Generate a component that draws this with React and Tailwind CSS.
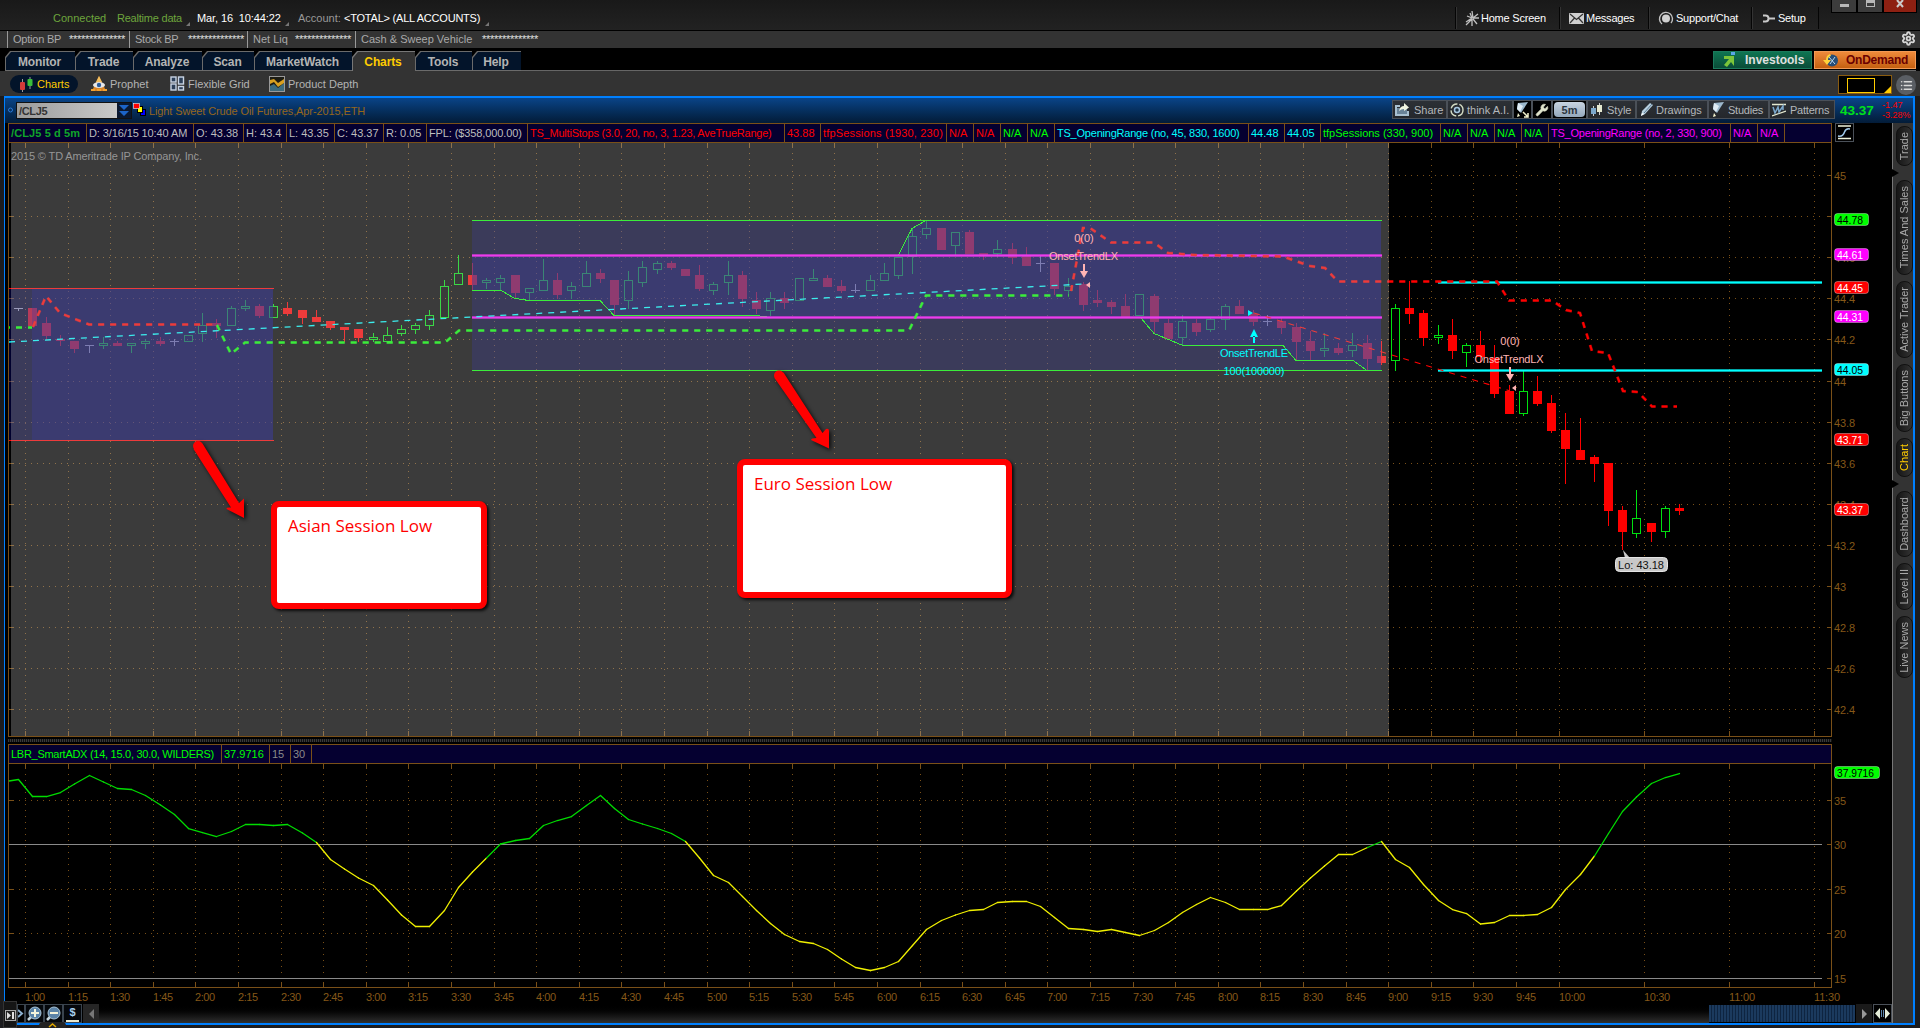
import React from 'react';
import { Settings, Wrench, List } from 'lucide-react';

const FIRST_BAR = 18;
const BAR_STEP = 14.2;
const AXIS = '#7a5018';
const AXIS_TEXT = '#865818';

// [type, body top, body bottom, high, low] - r: down bar, g: up bar, d: doji
const candles = [
  ['d', 308, 308, 308, 311], ['r', 308, 326, 308, 326], ['r', 323, 336, 317, 340], ['r', 339, 341, 335, 346],
  ['r', 341, 349, 341, 353], ['d', 345, 345, 345, 353], ['g', 343, 346, 337, 349], ['r', 343, 346, 341, 346],
  ['g', 343, 346, 343, 353], ['g', 341, 344, 339, 349], ['r', 341, 344, 337, 346], ['d', 341, 341, 339, 346],
  ['g', 335, 342, 335, 342], ['g', 325, 334, 313, 342], ['r', 323, 326, 319, 338], ['g', 308, 326, 306, 326],
  ['g', 306, 309, 300, 311], ['r', 306, 316, 304, 318], ['g', 306, 318, 304, 318], ['r', 308, 314, 302, 316],
  ['r', 310, 318, 310, 324], ['r', 317, 322, 310, 322], ['r', 321, 328, 321, 330], ['r', 327, 330, 327, 342],
  ['r', 329, 338, 329, 342], ['g', 337, 340, 333, 342], ['g', 335, 342, 327, 342], ['g', 329, 334, 325, 336],
  ['g', 325, 330, 323, 334], ['g', 315, 326, 310, 330], ['g', 286, 318, 280, 318], ['g', 273, 285, 255, 285],
  ['r', 275, 285, 263, 290], ['g', 280, 283, 278, 289], ['g', 278, 283, 275, 290], ['r', 275, 293, 275, 298],
  ['g', 288, 293, 288, 300], ['g', 280, 291, 259, 291], ['r', 280, 295, 273, 299], ['g', 286, 291, 282, 299],
  ['g', 273, 287, 261, 287], ['r', 273, 279, 269, 283], ['r', 280, 305, 280, 316], ['g', 280, 301, 271, 309],
  ['g', 267, 283, 261, 287], ['g', 263, 270, 261, 274], ['r', 263, 268, 261, 270], ['r', 269, 276, 269, 276],
  ['r', 275, 289, 265, 291], ['g', 284, 291, 282, 295], ['g', 275, 283, 261, 295], ['r', 275, 299, 271, 307],
  ['r', 300, 309, 292, 314], ['g', 298, 311, 292, 316], ['r', 298, 303, 292, 309], ['g', 278, 301, 278, 301],
  ['g', 278, 281, 269, 281], ['r', 278, 287, 275, 287], ['r', 286, 291, 280, 293], ['d', 290, 290, 284, 293],
  ['g', 280, 291, 275, 291], ['g', 273, 281, 263, 281], ['g', 257, 276, 257, 279], ['g', 236, 257, 228, 274],
  ['g', 228, 235, 220, 239], ['r', 228, 250, 228, 250], ['g', 232, 246, 232, 255], ['r', 232, 254, 230, 254],
  ['r', 253, 255, 253, 260], ['g', 249, 254, 240, 257], ['r', 249, 258, 243, 264], ['r', 256, 266, 247, 266],
  ['d', 263, 263, 256, 272], ['r', 263, 289, 263, 295], ['g', 286, 291, 278, 295], ['r', 284, 305, 282, 311],
  ['r', 300, 303, 290, 307], ['r', 302, 307, 300, 314], ['r', 306, 317, 294, 317], ['g', 294, 316, 294, 316],
  ['r', 296, 322, 294, 333], ['r', 323, 339, 319, 339], ['g', 321, 338, 315, 345], ['r', 323, 332, 319, 336],
  ['g', 319, 330, 317, 332], ['g', 306, 320, 304, 330], ['r', 306, 314, 300, 314], ['r', 314, 322, 310, 326],
  ['d', 321, 321, 315, 326], ['r', 321, 328, 317, 334], ['r', 327, 342, 323, 360], ['r', 341, 351, 331, 360],
  ['g', 348, 351, 333, 357], ['r', 348, 353, 343, 355], ['g', 345, 351, 333, 357], ['r', 343, 359, 335, 370],
  ['r', 356, 363, 341, 365], ['g', 308, 361, 304, 371], ['r', 308, 314, 281, 324], ['r', 313, 338, 310, 346],
  ['g', 335, 338, 325, 344], ['r', 335, 351, 319, 359], ['g', 345, 353, 343, 367], ['r', 345, 357, 331, 363],
  ['r', 358, 394, 345, 398], ['r', 391, 414, 385, 414], ['g', 391, 414, 371, 416], ['r', 391, 404, 376, 406],
  ['r', 403, 431, 395, 433], ['r', 430, 449, 413, 484], ['r', 450, 460, 418, 460], ['r', 457, 464, 455, 482],
  ['r', 463, 511, 463, 526], ['r', 510, 532, 506, 550], ['g', 518, 534, 490, 538], ['r', 523, 532, 523, 542],
  ['g', 508, 532, 506, 538], ['r', 508, 511, 504, 515],
];

// y of the ADX line at each bar, starting at the left edge of the plot
const adx = [
  779.5, 796.5, 796.5, 792.5, 784, 775.5, 782, 788.5, 789.5, 795.5, 805, 814.5, 828.5, 832.5, 836.5, 831.5, 824.5,
  824.5, 825.5, 824.5, 833, 842.5, 859.5, 869, 878, 885.5, 900, 915, 926.5, 926.5, 910.5, 887.5, 872, 858, 844,
  840.5, 838.5, 825.5, 820.5, 816.5, 805.5, 795.5, 808.5, 819.5, 824, 828.5, 833.5, 841.5, 858, 875.5, 882.5, 896.5,
  910.5, 923.5, 934.5, 941.5, 943.5, 949.5, 959, 967.5, 970.5, 967.5, 961.5, 945.5, 929.5, 920.5, 915, 910.5, 909.5,
  902.5, 901.5, 901.5, 906.5, 917.5, 928.5, 929.5, 931.5, 929.5, 932.5, 935.5, 930.5, 922.5, 912.5, 904.5, 897.5,
  902.5, 909.5, 909.5, 909.5, 905.5, 891, 878, 866, 854.5, 854.5, 847.5, 841.5, 859.5, 867.5, 884.5, 900.5, 909.5,
  913.5, 924, 922.5, 915.5, 915.5, 914.5, 907.5, 889.5, 874.5, 856, 833.5, 811.5, 797, 783.5, 777.5, 773.5,
];

const times = [
  '1:00', '1:15', '1:30', '1:45', '2:00', '2:15', '2:30', '2:45', '3:00', '3:15', '3:30', '3:45', '4:00', '4:15',
  '4:30', '4:45', '5:00', '5:15', '5:30', '5:45', '6:00', '6:15', '6:30', '6:45', '7:00', '7:15', '7:30', '7:45',
  '8:00', '8:15', '8:30', '8:45', '9:00', '9:15', '9:30', '9:45', '10:00', null, '10:30', null, '11:00', null, '11:30',
];

const timeTicks = times
  .map((label, i) => ({ label, x: Math.floor(25.4 + 42.6 * i) }))
  .filter((t) => t.label);

const priceY = (p) => Math.floor(175.4 + (45 - p) * 205.6);
const barX = (i) => Math.floor(FIRST_BAR + 0.1 + BAR_STEP * i);

const prices = [45, 44.8, 44.6, 44.4, 44.2, 44, 43.8, 43.6, 43.4, 43.2, 43, 42.8, 42.6, 42.4];
const adxLevels = [[35, 800], [30, 844], [25, 889], [20, 933], [15, 978]];

const priceTags = [
  ['44.78', 219, '#00ff00', '#000'],
  ['44.61', 254, '#ff00ff', '#fff'],
  ['44.45', 287, '#ff0000', '#fff'],
  ['44.31', 316, '#ff00ff', '#fff'],
  ['44.05', 369, '#00ffff', '#000'],
  ['43.71', 439, '#ff0000', '#fff'],
  ['43.37', 509, '#ff0000', '#fff'],
];

const infoCells = [
  ['/CLJ5 5 d 5m', 'w-[78px] text-[#10a52a] font-bold tracking-[0.01em]'],
  ['D: 3/16/15 10:40 AM', 'w-[107px] text-[#bdbdbd] tracking-[-0.01em]'],
  ['O: 43.38', 'w-[50px] text-[#bdbdbd]'],
  ['H: 43.4', 'w-[43px] text-[#bdbdbd]'],
  ['L: 43.35', 'w-[48px] text-[#bdbdbd]'],
  ['C: 43.37', 'w-[49px] text-[#bdbdbd]'],
  ['R: 0.05', 'w-[43px] text-[#bdbdbd]'],
  ['FPL: ($358,000.00)', 'w-[101px] text-[#bdbdbd] tracking-[-0.01em]'],
  ['TS_MultiStops (3.0, 20, no, 3, 1.23, AveTrueRange)', 'w-[257px] text-[#ff0000] tracking-[-0.02em]'],
  ['43.88', 'w-[36px] text-[#ff0000]'],
  ['tfpSessions (1930, 230)', 'w-[126px] text-[#ff0000] tracking-[0.015em]'],
  ['N/A', 'w-[27px] text-[#ff0000]'],
  ['N/A', 'w-[27px] text-[#ff0000]'],
  ['N/A', 'w-[27px] text-[#00ff00]'],
  ['N/A', 'w-[27px] text-[#00ff00]'],
  ['TS_OpeningRange (no, 45, 830, 1600)', 'w-[194px] text-[#00ffff] tracking-[-0.02em]'],
  ['44.48', 'w-[36px] text-[#00ffff]'],
  ['44.05', 'w-[36px] text-[#00ffff]'],
  ['tfpSessions (330, 900)', 'w-[120px] text-[#00ff00]'],
  ['N/A', 'w-[27px] text-[#00ff00]'],
  ['N/A', 'w-[27px] text-[#00ff00]'],
  ['N/A', 'w-[27px] text-[#00ff00]'],
  ['N/A', 'w-[27px] text-[#00ff00]'],
  ['TS_OpeningRange (no, 2, 330, 900)', 'w-[182px] text-[#ff00ff] tracking-[-0.02em]'],
  ['N/A', 'w-[27px] text-[#ff00ff]'],
  ['N/A', 'w-[27px] text-[#ff00ff]'],
];

const adxCells = [
  ['LBR_SmartADX (14, 15.0, 30.0, WILDERS)', 'w-[213px] text-[#00ff00] tracking-[-0.025em]'],
  ['37.9716', 'w-[48px] text-[#00ff00]'],
  ['15', 'w-[21px] text-[#8a8a8a]'],
  ['30', 'w-[21px] text-[#8a8a8a]'],
];

const tabs = [
  ['Monitor', 'w-[70px]'],
  ['Trade', 'w-[58px]'],
  ['Analyze', 'w-[69px]'],
  ['Scan', 'w-[52px]'],
  ['MarketWatch', 'w-[98px]'],
  ['Charts', 'w-[63px]'],
  ['Tools', 'w-[57px]'],
  ['Help', 'w-[49px]'],
];

const sideTabs = [
  ['Trade', 'h-[40px] mt-[3px]'],
  ['Times And Sales', 'h-[95px] mt-[14px]'],
  ['Active Trader', 'h-[77px] mt-[6px]'],
  ['Big Buttons', 'h-[68px] mt-[6px]'],
  ['Chart', 'h-[39px] mt-[6px]'],
  ['Dashboard', 'h-[66px] mt-[14px]'],
  ['Level II', 'h-[47px] mt-[6px]'],
  ['Live News', 'h-[62px] mt-[6px]'],
];

const Corner = ({ className }) => (
  <svg className={`shrink-0 ${className}`} width="4" height="4">
    <path d="M4 0V4H0Z" fill="#777" />
  </svg>
);

const InfoRow = ({ cells }) => (
  <div className="flex h-5 w-[1824px] shrink-0 border-y border-l border-[#7a5018] bg-[#050030]">
    {cells.map(([text, cls], i) => (
      <div key={i} className={`shrink-0 whitespace-nowrap border-r border-[#7a5018] pl-[2px] leading-[18px] ${cls}`}>
        {text}
      </div>
    ))}
    <div className="flex-1 border-r border-[#7a5018]" />
  </div>
);

const ThickDash = ({ points, color, offset = 0 }) => (
  <g fill="none" stroke={color} strokeDasharray="6 6" strokeDashoffset={offset}>
    <polyline points={points} strokeWidth="3" opacity="0.5" />
    <polyline points={points} strokeWidth="2" />
  </g>
);

const Band = ({ x1, x2, y, color }) => (
  <g fill={color}>
    <rect x={x1} y={y - 1} width={x2 - x1} height="3" opacity="0.65" />
    <rect x={x1} y={y} width={x2 - x1} height="1" />
  </g>
);

const Candle = ({ x, bar }) => {
  const [type, top, bottom, high, low] = bar;
  if (type === 'd') {
    return (
      <g fill="#c8c8c8">
        <rect x={x - 4} y={top} width="9" height="1" />
        <rect x={x} y={high} width="1" height={low - high} />
      </g>
    );
  }
  const color = type === 'r' ? '#ff0000' : '#00e010';
  return (
    <g fill={color}>
      <rect x={x} y={high} width="1" height={top - high} />
      <rect x={x} y={bottom} width="1" height={low - bottom} />
      {type === 'r' ? (
        <rect x={x - 4} y={top} width="9" height={bottom - top} />
      ) : (
        <rect x={x - 3.5} y={top + 0.5} width="8" height={Math.max(bottom - top - 1, 1)} fill="none" stroke={color} />
      )}
    </g>
  );
};

const Grid = ({ rows, top, bottom }) => (
  <g shapeRendering="crispEdges" stroke={AXIS}>
    {timeTicks.map(({ x }) => (
      <g key={x}>
        <line x1={x + 0.5} x2={x + 0.5} y1={top + 10} y2={bottom - 6} strokeDasharray="1 5" />
        <line x1={x + 0.5} x2={x + 0.5} y1={top} y2={top + 5} />
        <line x1={x + 0.5} x2={x + 0.5} y1={bottom - 5} y2={bottom} />
      </g>
    ))}
    {rows.map((y) => (
      <g key={y}>
        <line x1="19" x2="1823" y1={y + 0.5} y2={y + 0.5} strokeDasharray="1 5" />
        <line x1="9" x2="14" y1={y + 0.5} y2={y + 0.5} />
        <line x1="1827" x2="1832" y1={y + 0.5} y2={y + 0.5} />
      </g>
    ))}
    <path d={`M8.5 ${top}V${bottom + 0.5}H1831.5V${top}`} fill="none" />
  </g>
);

const Tag = ({ x, y, w, text, fill, color }) => (
  <g>
    <rect x={x + 0.5} y={y - 5.5} width={w} height="12" rx="3" fill={fill} stroke="#fff" strokeOpacity="0.35" />
    <text x={x + 3} y={y + 5} fill={color} textLength={w - 8} lengthAdjust="spacingAndGlyphs">{text}</text>
  </g>
);

const SellMarker = ({ x, y }) => (
  <g fill="#ffb4b4">
    <rect x={x - 1} y={y} width="2" height="9" />
    <path d={`M${x - 4} ${y + 7}H${x + 4}L${x} ${y + 14}Z`} />
    <path d={`M${x + 6} ${y + 18}V${y + 24}L${x + 2} ${y + 21}Z`} />
  </g>
);

const PriceChart = () => (
  <svg className="block shrink-0" width="1887" height="594" viewBox="5 143 1887 594" fontSize="11">
    <Grid rows={prices.map(priceY)} top={143} bottom={736} />
    <g shapeRendering="crispEdges">
      {candles.map((bar, i) => (
        <Candle key={i} x={barX(i)} bar={bar} />
      ))}
      <g fill="#000091" fillOpacity="0.31">
        <rect x="9" y="289" width="264" height="151" />
        <rect x="32" y="289" width="241" height="151" />
        <rect x="472" y="220" width="909" height="150" />
        <path d="M472 255H899L912 228L926 220H1381V370H1367L1353 360H1296L1283 345H1183L1154 333L1141 317H767L757 315H614L600 300H529L515 298L501 290H472Z" />
      </g>
      <rect x="9" y="288" width="265" height="1" fill="#ff0000" />
      <rect x="9" y="440" width="265" height="1" fill="#ff0000" />
      <rect x="472" y="220" width="910" height="1" fill="#00ff00" />
      <rect x="472" y="370" width="910" height="1" fill="#00ff00" />
      <g fill="none" stroke="#00ff00">
        <path d="M472 290.5H501L515 298.5L529 300.5H600L614 315.5H757L767 317" />
        <path d="M898 256L912 228.5L926 220.5" />
        <path d="M1141 318L1154 333.5L1183 345.5H1283L1296 360.5H1353L1367 370.5" />
      </g>
    </g>
    <Band x1={472} x2={1382} y={255} color="#ff00ff" />
    <Band x1={472} x2={1382} y={317} color="#ff00ff" />
    <Band x1={1438} x2={1822} y={282} color="#00ffff" />
    <Band x1={1438} x2={1822} y={370} color="#00ffff" />
    <ThickDash color="#00ff00" offset={5} points="9,327.5 32,327.5" />
    <ThickDash color="#ff0000" points="33,327 46,296 60,313 75,319 89,324.5 217,324.5" />
    <ThickDash color="#00ff00" points="217,325 231,354 245,342.5 445,342.5 459,330.5 909,330.5 926,295.5 1069,295.5" />
    <ThickDash
      color="#ff0000"
      points="1071,291 1083,228 1090,228 1111,242.5 1154,242.5 1168,253 1195,255 1283,256.5 1310,266 1325,268 1338,281.5 1497,281.5 1509,300.5 1552,300.5 1566,310 1580,313 1592,351 1608,353 1623,391 1638,392 1652,406.5 1677,406.5"
    />
    <g fill="none" strokeDasharray="6 6">
      <line x1="9" y1="342" x2="1083" y2="284" stroke="#00ffff" strokeWidth="1.3" />
      <line x1="1254" y1="313" x2="1510" y2="391" stroke="#ff0000" strokeWidth="1.2" />
    </g>
    {/* extended-hours shading, up to the 9:00 open */}
    <rect x="11" y="143" width="1378" height="593" fill="#c3c3c3" fillOpacity="0.3" />

    <text x="11" y="160" fill="#969696" textLength="191">2015 © TD Ameritrade IP Company, Inc.</text>

    <g fill="#ffb4b4" textAnchor="middle">
      <text x="1084" y="242">0(0)</text>
      <text x="1083.5" y="260" textLength="69">OnsetTrendLX</text>
      <text x="1510" y="345">0(0)</text>
      <text x="1509" y="363" textLength="69">OnsetTrendLX</text>
    </g>
    <SellMarker x={1084} y={264} />
    <SellMarker x={1510} y={367} />
    <g fill="#00ffff" textAnchor="middle">
      <text x="1254" y="357" textLength="68">OnsetTrendLE</text>
      <text x="1254" y="375" textLength="61">100(100000)</text>
      <path d="M1250 337H1258L1254 329ZM1253 336H1255V343H1253ZM1248 310V316L1253 313Z" />
    </g>

    <g>
      <path d="M1623 550L1625 558H1630Z" fill="#c8c8c8" />
      <rect x="1615.5" y="557.5" width="52" height="14" rx="4" fill="#c8c8c8" stroke="#e4e4e4" />
      <text x="1618" y="569" fill="#111" textLength="46" lengthAdjust="spacingAndGlyphs">Lo: 43.18</text>
    </g>

    {prices.map((p) => {
      return p === 44.8 ? null : (
        <text key={p} x="1834" y={priceY(p) + 5} fill={AXIS_TEXT} textLength={String(p).length > 2 ? 21 : 12}>{p}</text>
      );
    })}
    {priceTags.map(([text, y, fill, color]) => (
      <Tag key={text} x={1834} y={y} w={34} text={text} fill={fill} color={color} />
    ))}
  </svg>
);

const AdxChart = () => (
  <svg className="block shrink-0" width="1887" height="240" viewBox="5 764 1887 240" fontSize="11">
    <Grid rows={[800, 889, 933]} top={764} bottom={987} />
    <g shapeRendering="crispEdges">
      <rect x="9" y="844" width="1813" height="1" fill="#8a8a8a" />
      <rect x="9" y="978" width="1813" height="1" fill="#8a8a8a" />
      <rect x="1827" y="844" width="5" height="1" fill={AXIS} />
      <rect x="1827" y="978" width="5" height="1" fill={AXIS} />
    </g>
    <line x1="9" y1="781" x2="18.5" y2="779.5" stroke="#00dc00" strokeWidth="1.3" />
    {adx.slice(1).map((y, i) => (
      <line
        key={i}
        x1={barX(i) + 0.5}
        y1={adx[i]}
        x2={barX(i + 1) + 0.5}
        y2={y}
        strokeWidth="1.3"
        stroke={y < 845 ? '#00dc00' : '#f0f000'}
        strokeLinecap="round"
      />
    ))}
    <Tag x={1834} y={772} w={45} text="37.9716" fill="#00ff00" color="#000" />
    {adxLevels.map(([v, y]) => (
      <text key={v} x="1834" y={y + 5} fill={AXIS_TEXT}>{v}</text>
    ))}
    {timeTicks.map(({ label, x }) => (
      <text key={x} x={x} y="1001" fill={AXIS_TEXT} textLength={label.length > 4 ? 26 : 20}>{label}</text>
    ))}
  </svg>
);

// Callout boxes and arrows drawn on top of the chart
const Annotations = () => (
  <>
    <svg
      className="pointer-events-none absolute left-0 top-0 drop-shadow-[2px_2px_2px_rgba(0,0,0,0.8)]"
      width="1100"
      height="560"
      fill="#ff0000"
    >
      <circle cx="198" cy="446" r="5" />
      <path d="M193.500 449L202.500 443.500L239 503L244 498.500V518L226.500 509Q226 507 231 507.500Z" />
      <circle cx="779" cy="375.500" r="5" />
      <path d="M774.500 378L783.500 372.500L822.500 433L826 429Q829 428 829 431V448.500L811 440Q811 438 816.500 438Z" />
    </svg>
    <div className="absolute left-[271px] top-[501px] h-[108px] w-[216px] rounded-lg border-[6px] border-[#ff0000] bg-white pl-[11px] pt-[6px] font-['Open_Sans','Noto_Sans',sans-serif] text-[17px] leading-[25px] text-[#ff0000] shadow-[2px_2px_3px_rgba(0,0,0,0.8)]">
      Asian Session Low
    </div>
    <div className="absolute left-[737px] top-[459px] h-[139px] w-[275px] rounded-lg border-[6px] border-[#ff0000] bg-white pl-[11px] pt-[6px] font-['Open_Sans','Noto_Sans',sans-serif] text-[17px] leading-[25px] text-[#ff0000] shadow-[2px_2px_3px_rgba(0,0,0,0.8)]">
      Euro Session Low
    </div>
  </>
);

const StarIcon = () => (
  <svg className="shrink-0" width="15" height="17" viewBox="0 0 15 17" stroke="#c0c0c0" strokeWidth="1.3">
    <path d="M7 1L8 8L13 4M8 8H14M8 9L12 14M7 9V16M7 9L1 15M7 8L1 12M7 8L2 6M7 8L5 3" fill="none" />
  </svg>
);

const MailIcon = () => (
  <svg className="shrink-0" width="15" height="11" viewBox="0 0 15 11">
    <rect width="15" height="11" rx="1" fill="#d0d0d0" />
    <path d="M1 1L7.500 6.500L14 1M1 10L5.500 5M14 10L9.500 5" fill="none" stroke="#333" strokeWidth="1.2" />
  </svg>
);

const SupportIcon = () => (
  <svg className="shrink-0" width="16" height="15" viewBox="0 0 16 15">
    <circle cx="8" cy="7.500" r="4" fill="#d0d0d0" />
    <path d="M4 13A6.500 6.500 0 1 1 13 12" fill="none" stroke="#c0c0c0" strokeWidth="1.4" />
  </svg>
);

const SetupIcon = () => (
  <svg className="shrink-0" width="14" height="9" viewBox="0 0 14 9">
    <path d="M1 1.500H3.500A3 3 0 0 1 3.500 7.500H1M6.500 4.500H13" fill="none" stroke="#c8c8c8" strokeWidth="2" />
  </svg>
);

const topLink = 'mb-px mt-[7px] flex items-center whitespace-nowrap border-l border-[#050505] leading-none tracking-[-0.02em] shadow-[inset_1px_0_0_#333]';

const TopBar = () => (
  <div className="flex h-[31px] shrink-0 border-b border-black bg-gradient-to-b from-[#191919] to-[#222] pl-[53px] leading-[36px]">
    <span className="w-16 text-[#6da53c]">Connected</span>
    <span className="w-[69px] whitespace-nowrap tracking-[-0.02em] text-[#6da53c]">Realtime data</span>
    <Corner className="mt-[22px]" />
    <span className="ml-[7px] w-[88px] whitespace-nowrap tracking-[-0.01em] text-white">Mar, 16 &nbsp;10:44:22</span>
    <Corner className="mt-[22px]" />
    <span className="ml-[9px] w-[46px] text-[#999]">Account:</span>
    <span className="w-[141px] whitespace-nowrap tracking-[-0.02em] text-white">&lt;TOTAL&gt; (ALL ACCOUNTS)</span>
    <Corner className="mt-[22px]" />
    <div className="ml-auto flex text-white">
      <div className={`${topLink} w-[104px] gap-[1px] pl-[9px]`}><StarIcon />Home Screen</div>
      <div className={`${topLink} w-[89px] gap-[2px] pl-[9px]`}><MailIcon />Messages</div>
      <div className={`${topLink} w-[103px] gap-[2px] pl-[9px]`}><SupportIcon />Support/Chat</div>
      <div className={`${topLink} w-[68px] gap-[2px] border-r pl-[10px]`}><SetupIcon />Setup</div>
    </div>
    <div className="ml-3 mr-[3px] flex h-[13px]">
      <div className="flex w-[26px] justify-center border border-t-0 border-black bg-[#3c3c3c] pt-1"><i className="block h-[3px] w-[9px] bg-[#b8b8b8]" /></div>
      <div className="flex w-[26px] justify-center border border-t-0 border-black bg-[#3c3c3c]"><i className="block h-[7px] w-[9px] border border-t-[3px] border-[#b8b8b8]" /></div>
      <div className="flex w-[34px] justify-center border border-t-0 border-black bg-[#8e2012]">
        <svg width="8" height="8" viewBox="0 0 8 8"><path d="M1 0L7 7M7 0L1 7" stroke="#ccc" strokeWidth="2" /></svg>
      </div>
    </div>
  </div>
);

const Stars = () => <span className="tracking-[-0.28px] text-[#e0e0e0]">**************</span>;

const BalanceBar = () => (
  <div className="flex h-[17px] shrink-0 bg-[#333] pl-[7px] pr-1 leading-[16px] text-[#aaa]">
    <div className="flex w-[122px] border-l border-[#999] pl-[5px]"><span className="w-[56px] tracking-[-0.02em]">Option BP</span><Stars /></div>
    <div className="flex w-[118px] border-l border-[#999] pl-[5px]"><span className="w-[53px] tracking-[-0.02em]">Stock BP</span><Stars /></div>
    <div className="flex w-[108px] border-l border-[#999] pl-[5px]"><span className="w-[42px]">Net Liq</span><Stars /></div>
    <div className="flex border-l border-[#999] pl-[5px]"><span className="w-[121px]">Cash &amp; Sweep Vehicle</span><Stars /></div>
    <Settings className="ml-auto" size={15} strokeWidth={3} color="#d4d4d4" />
  </div>
);

const MainTabs = () => (
  <div className="flex h-[23px] shrink-0 items-end bg-black pl-[5px] pr-[4px]">
    {tabs.map(([name, w]) => {
      const active = name === 'Charts';
      return (
        <div
          key={name}
          className={`h-[20px] pl-px pt-px [clip-path:polygon(5px_0,100%_0,100%_100%,0_100%,0_6px)] ${w} ${active ? 'bg-[#777]' : 'bg-[#6b6b6b] pb-px'}`}
        >
          <div
            className={`h-full pr-[2px] text-center text-[12px] font-bold leading-[20px] tracking-[-0.01em] [clip-path:polygon(5px_0,100%_0,100%_100%,0_100%,0_6px)] ${active ? 'bg-[#333] text-[#ffcc00]' : 'bg-[#03142a] text-[#b4b4b4]'}`}
          >
            {name}
          </div>
        </div>
      );
    })}
    <div className="flex h-full flex-1 items-start justify-end gap-[2px] border-b border-[#666] pt-[3px] text-[12px] font-bold">
      <div className="flex h-[18px] w-[99px] items-center border border-[#1b7a5c] bg-gradient-to-b from-[#0e7552] to-[#0a4c38] pl-[9px] text-[#e0e0e0]">
        <svg className="mr-[9px]" width="13" height="16" viewBox="0 0 13 16">
          <path d="M1 4H11V14L8 10L4 15L1 13L6 7H1Z" fill="#7cc53a" />
          <rect x="8" width="4" height="3" fill="#5aa6e8" />
        </svg>
        Investools
      </div>
      <div className="flex h-[18px] w-[102px] items-center border border-[#f29a55] bg-gradient-to-b from-[#ee8a3a] to-[#c4600f] pl-[8px] tracking-[-0.02em] text-[#6a0000]">
        <svg className="mr-[8px]" width="15" height="14" viewBox="0 0 15 14">
          <circle cx="9" cy="7.500" r="6" fill="#264e78" />
          <path d="M6 4L12 11M12 4L7 11" stroke="#bcd8ee" />
          <path d="M7 1A6 6 0 0 0 3 7H0L4 12L8 7H5A4 4 0 0 1 8 3Z" fill="#ffd23a" />
        </svg>
        OnDemand
      </div>
    </div>
  </div>
);

const SubBar = () => (
  <div className="flex h-[25px] shrink-0 bg-[#333] pl-[10px] pr-[4px] leading-[26px] text-[#b4b4b4]">
    <div className="mt-1 flex h-[18px] w-[68px] items-center rounded-full bg-[#03142a] pl-[9px] text-[#ffcc00]">
      <svg className="mr-[3px]" width="15" height="15" viewBox="0 0 15 15">
        <path d="M3.500 2V15M11 0V12" stroke="#999" />
        <rect x="1" y="5" width="5" height="8" rx="1" fill="#d33a3a" />
        <rect x="8.500" y="2" width="5" height="7" rx="1" fill="#3abf3a" />
      </svg>
      Charts
    </div>
    <div className="ml-[13px] flex w-[79px] items-center">
      <svg className="mr-[3px]" width="16" height="15" viewBox="0 0 16 15">
        <path d="M8 0L15 15H1Z" fill="#d8852a" />
        <path d="M8 0L11 6H5Z" fill="#f4c060" />
        <ellipse cx="8" cy="9" rx="6" ry="3" fill="#e8e8e8" />
        <circle cx="8" cy="9" r="2.200" fill="#2a5c9c" />
        <path d="M0 13H4V15H0ZM6 13H10V15H6ZM12 13H16V15H12Z" fill="#f0a030" />
      </svg>
      Prophet
    </div>
    <div className="flex w-[99px] items-center">
      <svg className="mr-[3px]" width="15" height="15" viewBox="0 0 15 15" fill="#2c3f58" stroke="#c8d4e4" strokeWidth="1.4">
        <rect x="1" y="1" width="5" height="5" /><rect x="8.500" y="1" width="5" height="7" />
        <rect x="1" y="8" width="5" height="6" /><rect x="8.500" y="10.500" width="5" height="3.500" />
      </svg>
      Flexible Grid
    </div>
    <div className="flex items-center">
      <svg className="mr-[3px]" width="16" height="16" viewBox="0 0 16 16">
        <rect x=".5" y=".5" width="15" height="15" fill="#1c1c14" stroke="#999" />
        <path d="M1 10L5 8L9 12L15 7V15H1Z" fill="#3d6b7c" />
        <path d="M1 4L5 3L9 7L15 3V7L9 11L5 6L1 8Z" fill="#d8a020" />
      </svg>
      Product Depth
    </div>
    <div className="ml-auto mt-1 flex gap-1">
      <svg width="54" height="19" viewBox="0 0 54 19">
        <rect x=".5" y=".5" width="53" height="18" fill="#000" stroke="#8a5c10" />
        <rect x="9.500" y="3.500" width="27" height="14" fill="none" stroke="#ffcc00" />
        <path d="M53 11V18H46Z" fill="#ffcc00" />
      </svg>
      <div className="flex h-5 w-5 items-center justify-center rounded-full bg-[#5a5e64]"><List size={13} strokeWidth={3} color="#d8d8d8" /></div>
    </div>
  </div>
);

const toolButton = 'flex h-full items-center border border-[#4a5058] bg-gradient-to-b from-[#2c3036] to-[#25282c]';

const FunnelIcon = ({ arrow }) => (
  <svg width="15" height="16" viewBox="0 0 15 16">
    <path d="M3 1L13 0L6 11L2 7Z" fill="#9cb8cc" />
    <path d="M3 1L8 4L5 10L2 7Z" fill="#e0ecf4" />
    <path d="M3 11L5 14L2 15Z" fill="#f4f4d0" />
    {arrow && <path d="M8 10L13 15M13 11V15H9" stroke="#f4f4d0" strokeWidth="1.5" fill="none" />}
  </svg>
);

const TitleBar = () => (
  <div className="flex h-[25px] shrink-0 items-start bg-gradient-to-b from-[#0a4488] to-[#031c38] pt-[4px] leading-[18px]">
    <svg className="ml-[3px] mr-[3px] mt-[5px]" width="5" height="6"><circle cx="2.500" cy="3" r="2" fill="none" stroke="#2a7ad8" /></svg>
    <div className="flex h-[17px] w-[116px] border border-[#111] bg-gradient-to-r from-[#9c9c9c] to-[#d0d0d0]">
      <span className="flex-1 pl-[2px] font-bold leading-[16px] tracking-[-0.03em] text-[#333]">/CLJ5</span>
      <div className="flex w-[14px] shrink-0 items-center justify-center bg-[#0a1830]">
        <svg width="10" height="12" viewBox="0 0 10 12" fill="#1c64c8"><path d="M0 0H10L5 5ZM0 6H10L5 11Z" /></svg>
      </div>
    </div>
    <svg className="ml-[1px] mt-px" width="14" height="14" viewBox="0 0 14 14">
      <rect x="7.500" y="6.500" width="5" height="6" fill="#0000ff" stroke="#000" />
      <rect x="4.500" y="3.500" width="5" height="6" fill="#ffff00" stroke="#000" />
      <rect x=".5" y=".5" width="6" height="5" fill="#ff0000" stroke="#eee" strokeWidth=".6" />
    </svg>
    <span className="ml-[2px] whitespace-nowrap tracking-[-0.01em] text-[#96661c]">Light Sweet Crude Oil Futures,Apr-2015,ETH</span>
    <div className="-mt-[2px] ml-auto flex h-[19px] whitespace-nowrap text-[#b4b8bc]">
      <div className={`${toolButton} w-[55px] pl-[2px]`}>
        <svg className="mr-[4px]" width="15" height="13" viewBox="0 0 15 13"><path d="M1 3H5M1 2V12H13V8" fill="none" stroke="#a8c0d0" strokeWidth="2" /><rect x="2" y="5" width="10" height="6" fill="#6a8498" /><path d="M4 8Q5 3 9 3V0L14 4.500L9 8V6Q6 6 4 8Z" fill="#f0f4e0" /></svg>
        Share
      </div>
      <div className={`${toolButton} w-[66px] pl-[2px]`}>
        <svg className="mr-[3px]" width="14" height="14" viewBox="0 0 14 14"><circle cx="7" cy="7" r="6" fill="none" stroke="#d4dcc4" strokeWidth="1.400" strokeDasharray="8 2" /><circle cx="7" cy="7" r="2.500" fill="#1c3040" stroke="#a8c8e0" strokeWidth="1.500" /></svg>
        think A.I.
      </div>
      <div className="flex w-[19px] items-center justify-center border border-[#4a5058] bg-black"><FunnelIcon arrow /></div>
      <div className="flex w-[20px] items-center justify-center border border-[#4a5058] bg-black"><Wrench size={14} fill="#e0e4cc" color="#e0e4cc" strokeWidth={1} /></div>
      <div className="w-[35px] border border-[#4a5058] bg-black p-[1px]"><div className="h-[15px] rounded-sm bg-gradient-to-b from-[#c8d4e0] to-[#94a8bc] text-center font-bold leading-[16px] text-[#2c3640]">5m</div></div>
      <div className={`${toolButton} w-[49px] pl-[2px]`}>
        <svg className="mr-[3px]" width="14" height="14" viewBox="0 0 14 14"><path d="M3.500 3V13M9.500 0V12" stroke="#ccc" /><rect x="1" y="5" width="5" height="6" fill="#7ca8cc" /><rect x="7" y="2" width="5" height="7" fill="#e4e8d0" /></svg>
        Style
      </div>
      <div className={`${toolButton} w-[72px] pl-[3px]`}>
        <svg className="mr-[2px]" width="14" height="15" viewBox="0 0 14 15"><path d="M10 1L13 3L5 12L1 14L2 9Z" fill="#b8d0e0" /><path d="M1 14L2 11L4 12Z" fill="#fff" /><path d="M12 2L4 11" stroke="#5c7c94" /></svg>
        Drawings
      </div>
      <div className={`${toolButton} w-[61px] pl-[2px] tracking-[-0.02em]`}><FunnelIcon /><span className="ml-[2px]">Studies</span></div>
      <div className={`${toolButton} w-[66px] pl-[2px] tracking-[-0.02em]`}>
        <svg className="mr-[4px]" width="14" height="14" viewBox="0 0 14 14" fill="none"><path d="M0 1.500H14M0 13L14 8" stroke="#e4e8d0" strokeWidth="1.300" /><path d="M1 4L3 10L6 4L7 9L11 3V7" stroke="#7ca8cc" strokeWidth="1.500" /></svg>
        Patterns
      </div>
    </div>
    <div className="ml-[5px] w-[42px] text-[13.5px] font-bold text-[#00e01c]">43.37</div>
    <div className="-mt-[2px] w-[31px] text-[9px] leading-[10px] text-[#ff0000]">-1.47<br />-3.28%</div>
  </div>
);

const SideTabs = () => (
  <div className="relative flex w-[21px] shrink-0 flex-col border-l border-[#777] bg-[#333] pl-[3px]">
    {sideTabs.map(([name, cls]) => (
      <div
        key={name}
        className={`flex w-[17px] shrink-0 items-center justify-center rounded-lg border border-[#111] bg-gradient-to-r from-[#161616] to-[#333] ${cls} ${name === 'Chart' ? 'text-[#ffcc00]' : 'text-[#a8a8a8]'}`}
      >
        <span className="rotate-180 whitespace-nowrap text-[11px] leading-none [writing-mode:vertical-rl]">{name}</span>
      </div>
    ))}
    <svg className="absolute -left-px top-[46px]" width="8" height="8"><path d="M0 0L7 4L0 8Z" fill="#000" /></svg>
    <svg className="absolute -left-px top-[357px]" width="8" height="8"><path d="M0 0L7 4L0 8Z" fill="#000" /></svg>
  </div>
);

const zoomButton = 'flex w-[19px] items-center justify-center border border-[#3a444e] bg-[#05080c]';

const BottomBar = () => (
  <div className="flex h-[19px] shrink-0 bg-black pl-[12px]">
    <div className="w-[8px] overflow-hidden border border-[#3a444e]"><svg width="6" height="17"><path d="M0 5L4 8.500L0 12" stroke="#8cb0d0" strokeWidth="2" fill="none" /></svg></div>
    {['M8 3V11M4 7H12', 'M4 7H12'].map((d) => (
      <div key={d} className={zoomButton}>
        <svg width="15" height="15" viewBox="0 0 15 15">
          <path d="M1 14L4 11" stroke="#c8d8e0" strokeWidth="2.500" />
          <circle cx="8" cy="7" r="6" fill="#5c84a8" stroke="#a8c4d8" />
          <path d={d} stroke="#f4f4dc" strokeWidth="2" />
        </svg>
      </div>
    ))}
    <div className={zoomButton}><span className="h-[16px] border-b-2 border-[#e8e8d0] px-[3px] font-bold leading-[13px] text-[#a8d0f0]">$</span></div>
    <div className="ml-[1px] flex w-[16px] items-center justify-center bg-[#262626]"><svg width="5" height="10"><path d="M5 0V10L0 5Z" fill="#777" /></svg></div>
    <div className="flex-1 bg-gradient-to-b from-black to-[#303030]" />
    <div className="my-px w-[146px] bg-[repeating-linear-gradient(90deg,#1b3a5e_0_2px,#0e2440_2px_3px)]" />
    <div className="ml-[1px] mr-px flex w-[16px] items-center justify-center bg-[#1a1a1a]"><svg width="5" height="10"><path d="M0 0V10L5 5Z" fill="#999" /></svg></div>
    <div className="flex w-[19px] items-center justify-center border border-[#4a5058]">
      <svg width="15" height="11" viewBox="0 0 15 11"><path d="M0 5.500L5 0V11ZM15 5.500L10 0V11Z" fill="#e4ecd8" /><path d="M6.500 2V9M8.500 2V9" stroke="#5c84a8" /></svg>
    </div>
  </div>
);

export default function App() {
  return (
    <div className="relative flex h-[1028px] w-[1920px] flex-col overflow-hidden bg-[#1c1c1e] font-['Liberation_Sans',Arial,sans-serif] text-[11px]">
      <TopBar />
      <BalanceBar />
      <MainTabs />
      <SubBar />
      <div className="mb-[3px] ml-1 mr-[5px] flex flex-1 flex-col border-y-2 border-l border-r-2 border-[#0080ff] bg-black">
        <TitleBar />
        <div className="flex flex-1">
          <div className="flex w-[1887px] shrink-0 flex-col">
            <div className="flex gap-[3px] pl-[3px]">
              <InfoRow cells={infoCells} />
              <svg width="19" height="19" viewBox="0 0 19 19" fill="none">
                <rect x=".5" y=".5" width="18" height="18" fill="#000" stroke="#4a5058" />
                <path d="M3 3H16M3 15.500H16" stroke="#f0f4dc" strokeWidth="1.500" />
                <path d="M3 13Q8 14 9.500 9Q11 5 15 6" stroke="#a0c8e8" strokeWidth="1.500" />
              </svg>
            </div>
            <PriceChart />
            <div className="mb-[2px] ml-[3px] mt-[2px] h-[3px] w-[1824px] bg-[repeating-linear-gradient(90deg,#3a3a3a_0_1px,#111_1px_2px)]" />
            <div className="pl-[3px]"><InfoRow cells={adxCells} /></div>
            <AdxChart />
            <BottomBar />
          </div>
          <SideTabs />
        </div>
      </div>
      <Annotations />
      <div className="absolute bottom-0 left-[3px] flex h-[27px] w-[14px] justify-center border border-[#333] bg-[#151515] pt-2">
        <svg width="11" height="11" viewBox="0 0 11 11"><rect x=".5" y=".5" width="10" height="10" fill="#222" stroke="#aaa" /><path d="M2 2V9L6 5.500ZM7 2H9V9H7Z" fill="#e0e0e0" /></svg>
      </div>
      <div className="absolute bottom-0 left-[39px] flex h-[6px] w-[27px] justify-center rounded-t bg-[#222]">
        <svg width="9" height="6" viewBox="0 0 9 6"><path d="M1 5L4.500 2L8 5" fill="none" stroke="#e0a800" strokeWidth="1.500" /></svg>
      </div>
    </div>
  );
}
